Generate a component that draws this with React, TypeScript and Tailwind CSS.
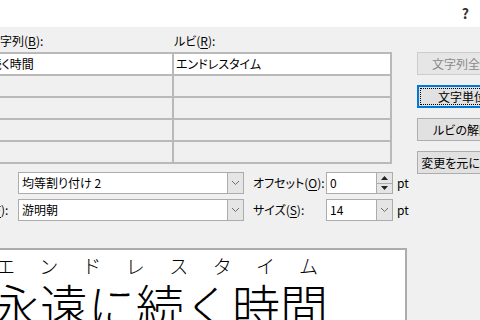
const U = ({ children }: { children: string }) => (
  <span className="underline underline-offset-2">{children}</span>
);

const Chevron = () => (
  <svg width="9" height="6" viewBox="0 0 9 6">
    <path d="M1 1 L4.5 4.5 L8 1" fill="none" stroke="#6d6d6d" strokeWidth="1" />
  </svg>
);

const App = () => {
  const rows = [
    ["永遠に続く時間", "エンドレスタイム"],
    ["", ""],
    ["", ""],
    ["", ""],
    ["", ""],
  ];
  const ruby = ["エ", "ン", "ド", "レ", "ス", "タ", "イ", "ム"];

  return (
    <div className="h-[320px] w-[480px] overflow-hidden bg-[#f0f0f0] font-['Noto_Sans_CJK_JP',sans-serif] text-[12px] text-black [font-feature-settings:'palt']">
      {/* Title bar */}
      <div className="flex h-[27px] items-center justify-end bg-white pr-[11px]">
        <span className="text-[14px] font-bold text-[#333]">?</span>
      </div>

      <div className="flex">
        {/* Left: grid, options, preview */}
        <div className="ml-[-80px] flex w-[490px] shrink-0 flex-col">
          <div className="flex h-[25px] items-center pt-[3px]">
            <div className="w-[254px] pl-[68px]">
              文字列(<U>B</U>):
            </div>
            <div>
              ルビ(<U>R</U>):
            </div>
          </div>

          <div className="grid w-[472px] grid-cols-[252px_216px] gap-[2px] border-2 border-l-0 border-[#b9b9b9] bg-[#b9b9b9]">
            {rows.map((r, i) => (
              <div key={i} className="contents">
                <div
                  className={`flex h-[20px] items-center whitespace-nowrap pl-[34px] ${i === 0 ? "bg-white" : "bg-[#f0f0f0]"}`}
                >
                  {r[0]}
                </div>
                <div
                  className={`flex h-[20px] items-center pl-[2px] ${i === 0 ? "bg-white" : "bg-[#f0f0f0]"}`}
                >
                  {r[1]}
                </div>
              </div>
            ))}
          </div>

          {/* Options row 1 */}
          <div className="mt-[8px] flex h-[22px] items-center">
            <div className="w-[98px] pl-[31px]">
              配置(<U>L</U>):
            </div>
            <div className="flex h-full w-[226px] border border-[#acacac] bg-white">
              <div className="flex flex-1 items-center pl-[3px]">均等割り付け 2</div>
              <div className="flex w-[16px] items-center justify-center border-l border-[#acacac] bg-[#e5e5e5]">
                <Chevron />
              </div>
            </div>
            <div className="w-[82px] pl-[9px]">
              オフセット(<U>O</U>):
            </div>
            <div className="flex h-full w-[67px] border border-[#acacac] bg-white">
              <div className="flex flex-1 items-center pl-[3px]">0</div>
              <div className="flex w-[16px] flex-col border-l border-[#acacac]">
                <div className="flex flex-1 items-center justify-center border-b border-[#acacac] bg-[#e5e5e5]">
                  <svg width="7" height="4" viewBox="0 0 7 4">
                    <path d="M0 4 L3.5 0 L7 4 Z" fill="#222" />
                  </svg>
                </div>
                <div className="flex flex-1 items-center justify-center bg-[#e5e5e5]">
                  <svg width="7" height="4" viewBox="0 0 7 4">
                    <path d="M0 0 L3.5 4 L7 0 Z" fill="#222" />
                  </svg>
                </div>
              </div>
            </div>
            <div className="ml-[4px]">pt</div>
          </div>

          {/* Options row 2 */}
          <div className="mt-[5px] flex h-[22px] items-center">
            <div className="w-[98px] pl-[31px]">
              フォント(<U>F</U>):
            </div>
            <div className="flex h-full w-[226px] border border-[#acacac] bg-white">
              <div className="flex flex-1 items-center pl-[3px]">游明朝</div>
              <div className="flex w-[16px] items-center justify-center border-l border-[#acacac] bg-[#e5e5e5]">
                <Chevron />
              </div>
            </div>
            <div className="w-[82px] pl-[9px]">
              サイズ(<U>S</U>):
            </div>
            <div className="flex h-full w-[67px] border border-[#acacac] bg-white">
              <div className="flex flex-1 items-center pl-[3px]">14</div>
              <div className="flex w-[16px] items-center justify-center border-l border-[#acacac] bg-[#e5e5e5]">
                <Chevron />
              </div>
            </div>
            <div className="ml-[4px]">pt</div>
          </div>

          {/* Preview */}
          <div className="mt-[27px] h-[100px] w-[487px] border-2 border-[#acacac] bg-white font-light">
            <div className="ml-[74px] mt-[6px] flex w-[322px] justify-between text-[19px] leading-[19px]">
              {ruby.map((c, i) => (
                <span key={i} className="w-[19px] text-center">
                  {c}
                </span>
              ))}
            </div>
            <div className="ml-[70px] mt-[5px] whitespace-nowrap text-[48px] leading-none [font-feature-settings:normal]">
              永遠に続く時間
            </div>
          </div>
        </div>

        {/* Right: buttons */}
        <div className="ml-[7px] flex shrink-0 flex-col gap-[10px] pt-[25px]">
          <button className="h-[23px] w-[90px] border border-[#cccccc] bg-[#e6e6e6] text-[#8a8a8a]">
            文字列全体
          </button>
          <button className="h-[23px] w-[90px] border-2 border-[#0078d7] bg-[#e1e1e1] p-px">
            <span className="flex h-full w-full items-center justify-center border border-dotted border-black">
              文字単位
            </span>
          </button>
          <button className="h-[23px] w-[90px] border border-[#adadad] bg-[#e1e1e1]">
            ルビの解除
          </button>
          <button className="h-[23px] w-[90px] whitespace-nowrap border border-[#adadad] bg-[#e1e1e1]">
            変更を元に戻す
          </button>
        </div>
      </div>
    </div>
  );
};

export default App;
